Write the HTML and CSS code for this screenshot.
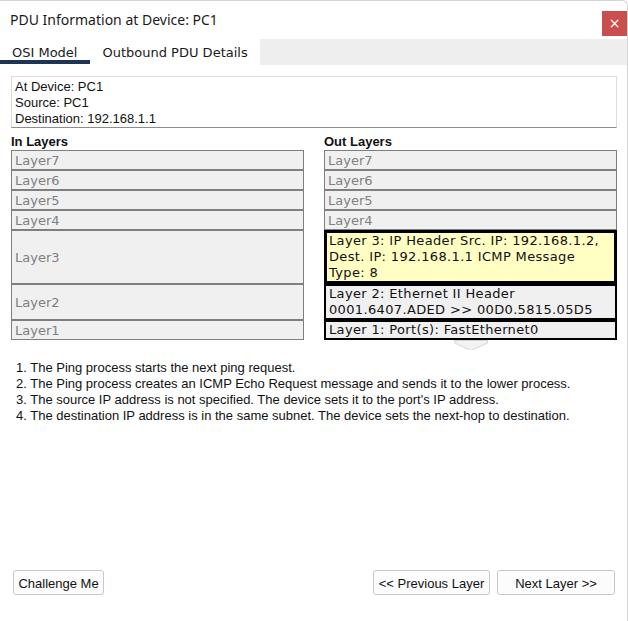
FILE: index.html
```html
<!DOCTYPE html>
<html lang="en">
<head>
<meta charset="utf-8">
<title>PDU Information at Device: PC1</title>
<link rel="stylesheet" href="styles.css">
</head>
<body>
<div class="window">
  <header class="titlebar">
    <span class="title">PDU Information at Device: PC1</span>
    <button class="close" type="button">×</button>
  </header>
  <nav class="tabs">
    <div class="tab active">OSI Model</div>
    <div class="tab">Outbound PDU Details</div>
    <div class="tab-fill"></div>
  </nav>
  <main class="content">
    <div class="info">
      <div>At Device: PC1</div>
      <div>Source: PC1</div>
      <div>Destination: 192.168.1.1</div>
    </div>
    <div class="layers">
      <div class="col-head">In Layers</div>
      <div class="col-head">Out Layers</div>

      <div class="layer">Layer7</div>
      <div class="layer">Layer7</div>
      <div class="layer">Layer6</div>
      <div class="layer">Layer6</div>
      <div class="layer">Layer5</div>
      <div class="layer">Layer5</div>
      <div class="layer">Layer4</div>
      <div class="layer">Layer4</div>
      <div class="layer">Layer3</div>
      <div class="layer out current">Layer 3: IP Header Src. IP: 192.168.1.2, Dest. IP: 192.168.1.1 ICMP Message Type: 8</div>
      <div class="layer">Layer2</div>
      <div class="layer out">Layer 2: Ethernet II Header 0001.6407.ADED &gt;&gt; 00D0.5815.05D5</div>
      <div class="layer">Layer1</div>
      <div class="layer out">Layer 1: Port(s): FastEthernet0</div>

      <div class="scroll-hint">
        <svg width="34" height="11" viewBox="0 0 34 11"><path d="M0.5 0.5 H33.5 V3 L17 10.5 L0.5 3 Z" fill="#f2f2f2" stroke="#d6d6d6"/></svg>
      </div>
    </div>
    <ol class="steps">
      <li>1. The Ping process starts the next ping request.</li>
      <li>2. The Ping process creates an ICMP Echo Request message and sends it to the lower process.</li>
      <li>3. The source IP address is not specified. The device sets it to the port's IP address.</li>
      <li>4. The destination IP address is in the same subnet. The device sets the next-hop to destination.</li>
    </ol>
  </main>
  <footer class="actions">
    <button class="btn btn-challenge" type="button">Challenge Me</button>
    <div class="nav-buttons">
      <button class="btn btn-prev" type="button">&lt;&lt; Previous Layer</button>
      <button class="btn btn-next" type="button">Next Layer &gt;&gt;</button>
    </div>
  </footer>
</div>
</body>
</html>
```

FILE: styles.css
```css
* { box-sizing: border-box; }

html, body {
  margin: 0;
  padding: 0;
  background: #ffffff;
}

.window {
  width: 628px;
  height: 621px;
  display: flex;
  flex-direction: column;
  border-top: 1px solid #d4d4d4;
  border-right: 1px solid #d4d4d4;
  border-top-right-radius: 6px;
  background: #ffffff;
  font-family: "Liberation Sans", Arial, sans-serif;
  font-size: 13px;
  color: #111111;
}

.titlebar {
  height: 38px;
  display: flex;
  align-items: center;
  justify-content: space-between;
  padding: 0 0 0 10px;
}

.title {
  font-family: "Noto Sans", "Open Sans", sans-serif;
  font-size: 14px;
  color: #1a1a1a;
  padding-bottom: 1px;
}

.close {
  width: 25px;
  height: 25px;
  margin-top: 6px;
  border: none;
  padding: 0;
  background: #c94f4f;
  color: #ffffff;
  font-family: "DejaVu Sans", sans-serif;
  font-size: 14px;
  line-height: 25px;
  text-align: center;
}

.tabs {
  height: 26px;
  display: flex;
  align-items: stretch;
  font-family: "DejaVu Sans", Verdana, sans-serif;
  font-size: 13px;
  color: #1a1a1a;
}

.tab {
  padding: 6px 12px 0 12px;
  background: #ffffff;
  margin-bottom: 1px;
  border-bottom: 4px solid transparent;
}

.tab.active {
  padding-right: 13px;
  border-bottom-color: #1c3557;
}

.tab-fill {
  flex: 1;
  background: #eeeeee;
}

.content {
  flex: 1;
  padding: 0 10px 0 11px;
}

.info {
  margin-top: 11px;
  border: 1px solid #dcdcdc;
  border-bottom-color: #8c8c8c;
  padding: 2px 4px 0 3px;
  line-height: 16px;
  font-size: 13px;
  color: #111111;
}

.layers {
  margin-top: 6px;
  display: grid;
  grid-template-columns: 293px 293px;
  column-gap: 20px;
}

.col-head {
  font-weight: bold;
  font-size: 13px;
  line-height: 16px;
  color: #111111;
}

.layer {
  border: 1px solid #7f7f7f;
  background: #f0f0f0;
  color: #808080;
  font-family: "DejaVu Sans", Verdana, sans-serif;
  font-size: 13px;
  line-height: 16px;
  padding: 2px 3px 0 3px;
  display: flex;
  align-items: center;
}

.layer.out {
  display: block;
  border: 2px solid #000000;
  color: #111111;
  line-height: 16px;
  letter-spacing: 0.35px;
  padding: 0 3px;
}

.layer.current {
  border-width: 3px;
  padding: 0 2px;
  background: #ffffc4;
}

.scroll-hint {
  grid-column: 2;
  display: flex;
  justify-content: center;
  height: 10px;
  overflow: hidden;
}

.scroll-hint svg { display: block; }

.steps {
  list-style: none;
  margin: 10px 0 0 0;
  padding: 0 0 0 5px;
  line-height: 16px;
  font-size: 13px;
  color: #111111;
}

.actions {
  display: flex;
  justify-content: space-between;
  align-items: center;
  padding: 0 12px 26px 13px;
}

.nav-buttons {
  display: flex;
  gap: 7px;
}

.btn {
  height: 25px;
  border: 1px solid #c8c8c8;
  border-radius: 3px;
  background: #fcfcfc;
  font-family: "Liberation Sans", Arial, sans-serif;
  font-size: 13px;
  color: #111111;
  padding: 1px 0 0 0;
  text-align: center;
}

.btn-challenge { width: 91px; }
.btn-prev { width: 117px; }
.btn-next { width: 118px; }
```
